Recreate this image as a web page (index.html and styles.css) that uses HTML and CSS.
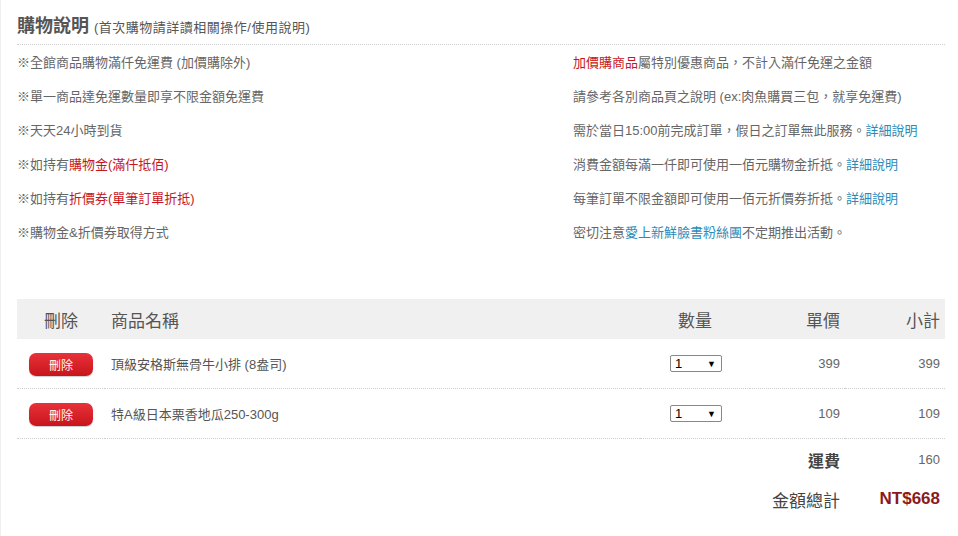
FILE: index.html
```html
<!DOCTYPE html>
<html lang="zh-Hant">
<head>
  <meta charset="UTF-8">
  <title>購物車</title>
  <link rel="stylesheet" href="styles.css">
</head>
<body>
  <div class="page">
    <h2 class="guide-title">購物說明 <small>(首次購物請詳讀相關操作/使用說明)</small></h2>
    <div class="guide">
      <div>※全館商品購物滿仟免運費 (加價購除外)</div>
      <div><span class="red">加價購商品</span>屬特別優惠商品，不計入滿仟免運之金額</div>
      <div>※單一商品達免運數量即享不限金額免運費</div>
      <div>請參考各別商品頁之說明 (ex:肉魚購買三包，就享免運費)</div>
      <div>※天天24小時到貨</div>
      <div>需於當日15:00前完成訂單，假日之訂單無此服務。<a href="#">詳細說明</a></div>
      <div>※如持有<span class="red">購物金(滿仟抵佰)</span></div>
      <div>消費金額每滿一仟即可使用一佰元購物金折抵。<a href="#">詳細說明</a></div>
      <div>※如持有<span class="red">折價券(單筆訂單折抵)</span></div>
      <div>每筆訂單不限金額即可使用一佰元折價券折抵。<a href="#">詳細說明</a></div>
      <div>※購物金&amp;折價券取得方式</div>
      <div>密切注意<a href="#">愛上新鮮臉書粉絲團</a>不定期推出活動。</div>
    </div>

    <table class="cart">
      <colgroup>
        <col style="width:88px">
        <col>
        <col style="width:110px">
        <col style="width:95px">
        <col style="width:100px">
      </colgroup>
      <thead>
        <tr>
          <th class="c-del">刪除</th>
          <th class="c-name">商品名稱</th>
          <th class="c-qty">數量</th>
          <th class="c-num">單價</th>
          <th class="c-num">小計</th>
        </tr>
      </thead>
      <tbody>
        <tr class="item">
          <td class="c-del"><button class="del-btn">刪除</button></td>
          <td class="c-name">頂級安格斯無骨牛小排 (8盎司)</td>
          <td class="c-qty"><span class="qty">1<i>▼</i></span></td>
          <td class="c-num">399</td>
          <td class="c-num">399</td>
        </tr>
        <tr class="item">
          <td class="c-del"><button class="del-btn">刪除</button></td>
          <td class="c-name">特A級日本栗香地瓜250-300g</td>
          <td class="c-qty"><span class="qty">1<i>▼</i></span></td>
          <td class="c-num">109</td>
          <td class="c-num">109</td>
        </tr>
        <tr class="sum ship">
          <td colspan="3"></td>
          <td class="c-num label">運費</td>
          <td class="c-num">160</td>
        </tr>
        <tr class="sum total">
          <td colspan="3"></td>
          <td class="c-num label">金額總計</td>
          <td class="c-num amount">NT$668</td>
        </tr>
      </tbody>
    </table>
  </div>
</body>
</html>
```

FILE: styles.css
```css
body {
  margin: 0;
  font-family: "Liberation Sans", "Noto Sans CJK TC", sans-serif;
  color: #666;
  background: #fff;
}
.page {
  min-height: 536px;
  box-sizing: border-box;
  border-left: 1px solid #eee;
  padding: 14px 13px 0 16px;
}
.guide-title {
  margin: 0;
  padding-bottom: 4px;
  font-size: 18px;
  font-weight: bold;
  color: #555;
  line-height: 24px;
  border-bottom: 1px dotted #cfcfcf;
}
.guide-title small {
  font-size: 13px;
  font-weight: normal;
  letter-spacing: 0.5px;
}
.guide {
  display: grid;
  grid-template-columns: 556px 1fr;
  font-size: 13px;
  line-height: 34px;
  padding-top: 1px;
  color: #666;
}
.red {
  color: #c8161d;
}
.guide a {
  color: #2b8bb8;
  text-decoration: none;
}
.cart {
  width: 928px;
  margin-top: 49px;
  border-collapse: collapse;
  table-layout: fixed;
  font-size: 13px;
}
.cart th {
  height: 40px;
  padding: 0;
  background: #f0f0f0;
  font-size: 17px;
  font-weight: normal;
  color: #555;
}
.cart td {
  padding: 0;
}
.c-del {
  text-align: center;
}
.c-name {
  text-align: left;
  padding-left: 6px !important;
}
.c-qty {
  text-align: center;
}
.c-num {
  text-align: right;
  padding-right: 5px !important;
}
.item td {
  height: 49px;
  border-bottom: 1px dotted #cfcfcf;
  color: #555;
}
.item .c-num {
  color: #666;
}
.del-btn {
  width: 64px;
  height: 23px;
  border: none;
  border-radius: 7px;
  background: linear-gradient(#e8323a, #c8141c);
  color: #fff;
  font-family: inherit;
  font-size: 12px;
  padding: 0;
  margin-top: 2px;
  box-shadow: 0 1px 1px rgba(0, 0, 0, 0.2);
}
.qty {
  display: inline-flex;
  justify-content: space-between;
  align-items: center;
  box-sizing: border-box;
  width: 52px;
  height: 17px;
  padding: 0 5px 0 4px;
  margin-left: 2px;
  border: 1px solid #888;
  border-radius: 2px;
  color: #000;
  font-size: 13px;
  text-align: left;
}
.qty i {
  font-style: normal;
  font-size: 9px;
}
.sum td {
  height: 38px;
}
.ship td {
  height: 41px;
}
.sum .label {
  font-size: 16px;
  color: #444;
}
.total .label {
  font-size: 17px;
}
.ship .label {
  font-weight: bold;
}
.amount {
  font-size: 17px;
  font-weight: bold;
  color: #8b1a1a;
}
```
